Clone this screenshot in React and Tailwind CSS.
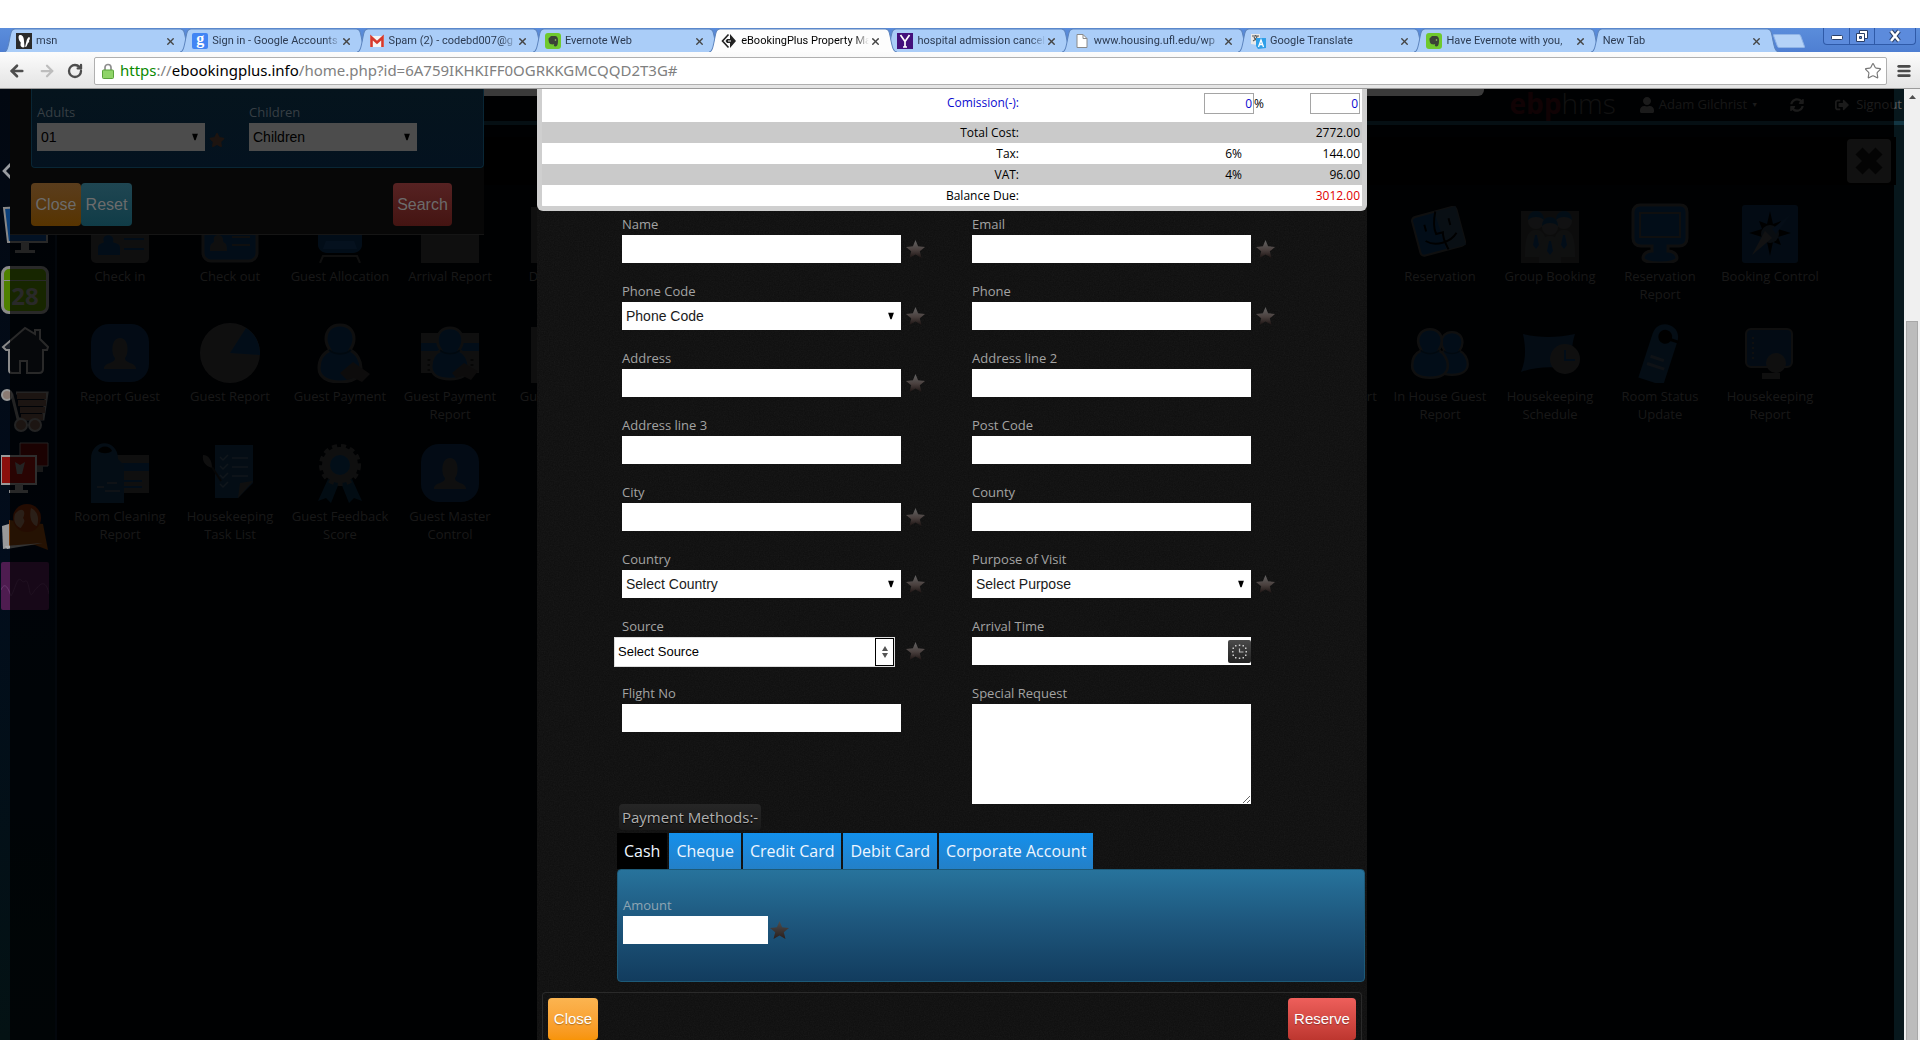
import React from 'react';
import { ArrowLeft, ArrowRight, RotateCw, Star, Menu, X } from 'lucide-react';
import { FaUser, FaSyncAlt, FaSignOutAlt, FaChevronLeft, FaStar } from 'react-icons/fa';

/* ---------- browser chrome ---------- */

const Fav = ({ kind }) => {
  const c = 'h-4 w-4 shrink-0';
  if (kind === 'msn')
    return (
      <svg className={c} viewBox="0 0 16 16">
        <rect width="16" height="16" fill="#2b2b2b" />
        <path d="M3 2.500c2.500-1.500 5 1 5 5.500l.5 6c-1.500 1-4 0-4-2 0-1.500.5-2 0-3C3 8 2 4 3 2.500z" fill="#fff" />
        <path d="M13 4c1.500.5 1 2.500 0 3.500.5 1 0 2-1 2.500l-1.500 3.500-1.500.5 1.500-6C11 6 12 4.500 13 4z" fill="#fff" />
      </svg>
    );
  if (kind === 'google')
    return (
      <span className="flex h-4 w-4 shrink-0 items-center justify-center rounded-xs bg-[#4285f4] pb-1 font-['Liberation_Serif',serif] text-base leading-none font-bold text-white">g</span>
    );
  if (kind === 'gmail')
    return (
      <svg className={c} viewBox="0 0 16 16">
        <path d="M1 3h14v11H1z" fill="#f4f4f4" />
        <path d="M2.500 14V4.500L8 9.500l5.500-5V14" fill="none" stroke="#d6392c" strokeWidth="2.600" />
      </svg>
    );
  if (kind === 'evernote')
    return (
      <svg className={c} viewBox="0 0 16 16">
        <rect width="16" height="16" rx="3" fill="#6fc92e" />
        <path d="M3.500 5.500L6 3h4c2 0 3 1.500 3 4.500s-.5 6-2.500 6-2-2-1-2.500c-1 .5-2.500.5-3.500.3C4 11 3.500 8 3.500 5.500z" fill="#3b4237" />
        <circle cx="10.500" cy="7" r=".8" fill="#9fd872" />
      </svg>
    );
  if (kind === 'ebp')
    return (
      <svg className={c} viewBox="0 0 16 16">
        <path d="M7.500 1.500L1.500 8l6 6.500" fill="none" stroke="#222" strokeWidth="1.600" />
        <path d="M9 1l6 7-6 7v-5H6L4.500 8 6 6h3z" fill="#222" />
        <path d="M7 8h3" stroke="#fff" />
      </svg>
    );
  if (kind === 'yahoo')
    return (
      <svg className={c} viewBox="0 0 16 16">
        <rect width="16" height="16" fill="#44107c" />
        <path d="M3.500 2L8 8.500 12.500 2M8 8v6M6 14h4" fill="none" stroke="#fff" strokeWidth="1.700" />
      </svg>
    );
  if (kind === 'doc')
    return (
      <svg className={c} viewBox="0 0 16 16">
        <path d="M3 1.500h6l4 4v9H3z" fill="#fff" stroke="#8a8a8a" />
        <path d="M9 1.500v4h4" fill="none" stroke="#8a8a8a" />
      </svg>
    );
  if (kind === 'translate')
    return (
      <svg className={c} viewBox="0 0 16 16">
        <path d="M1 1h9v9l-3 2-6-1z" fill="#e9e9e9" />
        <path d="M2 3h7M5.500 2v1M3 8c2-1 4-3 4-5M4 4c1 3 2 3 4 4" fill="none" stroke="#555" strokeWidth="1.100" />
        <path d="M6 5h10v10l-8 1-2-3z" fill="#2f9fe8" />
        <path d="M8.500 14l2.500-7 2.500 7M9.500 11.500h3" fill="none" stroke="#fff" strokeWidth="1.300" />
      </svg>
    );
  return null;
};

const TABS = [
  ['msn', 'msn'],
  ['Sign in - Google Accounts', 'google'],
  ['Spam (2) - codebd007@g', 'gmail'],
  ['Evernote Web', 'evernote'],
  ['eBookingPlus Property Ma', 'ebp'],
  ['hospital admission cancell', 'yahoo'],
  ['www.housing.ufl.edu/wp', 'doc'],
  ['Google Translate', 'translate'],
  ['Have Evernote with you,', 'evernote'],
  ['New Tab', null],
];

const Tab = ({ title, icon, active }) => (
  <div className={`relative flex h-6 min-w-0 flex-1 items-center pr-2 pl-2 ${active ? 'z-10' : ''}`}>
    <svg className="absolute inset-y-0 -left-1 h-6 w-[calc(100%+12px)]" viewBox="0 0 188 24" preserveAspectRatio="none">
      <path
        d="M0 24C3 24 4 20 6 9C7 3 8 1 11 1H176C179 1 180 3 181 9C183 20 184 24 188 24"
        fill={active ? '#fdfdfd' : '#aacdf8'}
        stroke="#5b83bd"
      />
    </svg>
    <button className="relative flex h-full min-w-0 flex-1 items-center gap-1 overflow-hidden pt-0.5">
      <Fav kind={icon} />
      <span
        className={`min-w-0 flex-1 overflow-hidden [mask-image:linear-gradient(to_right,black_88%,transparent)] text-left font-['Roboto',sans-serif] text-[11px] whitespace-nowrap ${active ? 'text-black' : 'text-[#2c3b52]'}`}
      >
        {title}
      </span>
    </button>
    <button aria-label={`Close ${title}`} className="relative flex w-3 items-center justify-center pt-0.5 text-[#444]">
      <X size={11} strokeWidth={3} />
    </button>
  </div>
);

const Chrome = () => (
  <header className="shrink-0 font-['Open_Sans',sans-serif]">
    <div className="h-7 bg-white" />
    <div className="flex h-6 bg-gradient-to-b from-[#5b8ddb] to-[#4f7fd2] pl-2">
      <nav className="flex min-w-0 flex-1">
        {TABS.map(([t, i]) => (
          <Tab key={t} title={t} icon={i} active={i === 'ebp'} />
        ))}
      </nav>
      <div className="flex w-[149px] shrink-0 items-start pl-1">
        <button aria-label="New tab" className="mt-1.5 h-3.5 w-7 skew-x-[20deg] rounded-xs border border-[#8fb3e6] bg-[#b4d2f7]" />
        <div className="mr-1 ml-auto flex h-[17px] w-[93px] divide-x divide-[#2f5aa8] rounded-b-sm border border-t-0 border-[#2f5aa8] bg-[#5c8bdc] text-white">
          <button aria-label="Minimize" className="flex w-[26px] items-center justify-center">
            <svg className="h-3 w-4" viewBox="0 0 16 12">
              <rect x="2.500" y="5.500" width="11" height="4" rx="1" fill="#fff" stroke="#2a3f68" />
            </svg>
          </button>
          <button aria-label="Restore" className="flex w-[25px] items-center justify-center">
            <svg className="h-3.5 w-4" viewBox="0 0 16 14">
              <g fill="#fff" stroke="#2a3f68">
                <path d="M5.500 1.500h8v8h-8z" />
                <path d="M2.500 4.500h8v8h-8z" />
                <path d="M5.500 7.500h2v2h-2z" fill="#5c8bdc" />
              </g>
            </svg>
          </button>
          <button aria-label="Close window" className="flex flex-1 items-center justify-center">
            <svg className="h-3.5 w-4" viewBox="0 0 16 14">
              <path d="M4 2l8 10M12 2L4 12" stroke="#2a3f68" strokeWidth="4.500" />
              <path d="M4 2l8 10M12 2L4 12" stroke="#fff" strokeWidth="2.500" />
            </svg>
          </button>
        </div>
      </div>
    </div>
    <div className="flex h-[37px] items-center border-b border-[#9b9b9b] bg-gradient-to-b from-[#fcfcfc] to-[#e4e4e4] px-2 pt-px">
      <button aria-label="Back" className="w-[30px] text-[#4d4d4d]"><ArrowLeft size={18} strokeWidth={3.5} /></button>
      <button aria-label="Forward" className="w-[29px] text-[#bdbdbd]"><ArrowRight size={18} strokeWidth={3} /></button>
      <button aria-label="Reload" className="w-[27px] text-[#4d4d4d]"><RotateCw size={16} strokeWidth={3.5} /></button>
      <div className="flex h-7 min-w-0 flex-1 items-center rounded-xs border border-[#b0b0b0] bg-white pr-1 pl-[7px]">
        <svg className="h-4 w-3 shrink-0" viewBox="0 0 12 16">
          <path d="M3 8V4.500a3 3 0 016 0V8" fill="none" stroke="#8e8e8e" strokeWidth="1.700" />
          <rect x=".5" y="7" width="11" height="8.500" rx="1" fill="#8fd468" stroke="#5aa23c" />
        </svg>
        <span className="ml-1.5 flex-1 truncate font-['Noto_Sans',sans-serif] text-[15px] text-[#808080]">
          <span className="text-[#0b8a00]">https</span>://<span className="text-black">ebookingplus.info</span>/home.php?id=6A759IKHKIFF0OGRKKGMCQQD2T3G#
        </span>
        <button aria-label="Bookmark" className="text-[#777]"><Star size={18} strokeWidth={1.5} /></button>
      </div>
      <button aria-label="Menu" className="ml-[9px] text-[#4a4a4a]"><Menu size={16} strokeWidth={4} /></button>
    </div>
  </header>
);

/* ---------- dimmed dashboard ---------- */

const B = '#0d4a85';
const W = '#555';

const Person = ({ x = 30, s = 1 }) => (
  <g transform={`translate(${x} 30) scale(${s}) translate(-30 -30)`}>
    <path
      d="M30 2c9 0 14 6 14 14 0 5-2 8-4 11 7 3 11 11 11 18 0 9-8 14-21 14S9 54 9 45c0-8 4-15 11-18-2-3-4-6-4-11 0-8 5-14 14-14z"
      fill={B}
      stroke={W}
      strokeWidth="3"
    />
    <path d="M19 27c6 5 16 5 22 0" fill="none" stroke="#0a3358" strokeWidth="2" />
  </g>
);

const ART = {
  card: (
    <>
      <rect x="1" y="8" width="58" height="52" rx="5" fill={W} />
      <path d="M8 52v-7c0-5 4-4 6-6-4-9 12-9 9 0 3 2 7 1 7 6v7z" fill={B} />
      <path d="M34 36h20M34 46h20" stroke={B} strokeWidth="2" />
    </>
  ),
  cardOut: (
    <>
      <rect x="3" y="6" width="54" height="52" rx="8" fill={B} stroke={W} strokeWidth="3" />
      <path d="M10 48c0-10 3-6 4-10-2-8 10-8 9 0 2 4 4 0 4 10z" fill={W} />
      <path d="M32 34h18M32 42h18" stroke={W} strokeWidth="2" />
    </>
  ),
  chair: (
    <>
      <path d="M8 28h44v14c0 4-4 8-9 8H17c-5 0-9-4-9-8z" fill={B} />
      <path d="M16 38h28l3 8H13z" fill="#1f5fa8" />
      <path d="M10 60l3-7h34l3 7" fill="none" stroke={W} strokeWidth="2" />
    </>
  ),
  sheet: <rect x="1" y="4" width="58" height="56" fill={W} />,
  guest: (
    <>
      <rect x="1" y="1" width="58" height="58" rx="18" fill="#123f70" />
      <path d="M14 46c0-7 11-5 11-11-4-4-4-20 5-20s9 16 5 20c0 6 11 4 11 11z" fill={W} />
    </>
  ),
  pie: (
    <>
      <circle cx="30" cy="30" r="30" fill={W} />
      <path d="M30 30L46 5a30 30 0 0114 27z" fill={B} />
    </>
  ),
  pay: (
    <>
      <Person />
      <path d="M30 50l13-11 17 12-8 8-8-4-7 2z" fill="#4a4340" />
    </>
  ),
  payCard: (
    <>
      <path d="M1 10h58v40H1z" fill={W} />
      <path d="M1 20h58v8H1z" fill={B} />
      <path d="M9 36v12M52 36v10" stroke="#222" strokeWidth="3" strokeDasharray="2 3" />
      <Person s={0.9} />
      <path d="M32 50l12-10 14 8-7 9-8-4-7 2z" fill="#4a4340" />
    </>
  ),
  cleaning: (
    <>
      <path d="M20 12h39v38H20z" fill={W} />
      <path d="M20 20h39v8H20zM34 37h18v2H34zM34 43h18v2H34z" fill={B} />
      <path d="M1 60V16C1-5 28-5 28 16l6 6v38z" fill="#174770" />
      <path d="M8 8c2-6 12-6 14 0-4 3-10 3-14 0z" fill="#000" />
      <path d="M7 44h7M17 40h10M15 48h15" stroke="#567" strokeWidth="2" />
    </>
  ),
  tasks: (
    <>
      <path d="M15 2h38v38L38 55H15z" fill="#174770" />
      <path d="M53 38L38 55l2-15z" fill={W} />
      <path d="M20 14l3 3 5-5M20 23l3 3 5-5M20 32l3 3 5-5M20 41l3 3 5-5M32 15h16M32 24h16M32 33h16" fill="none" stroke="#5b7a94" strokeWidth="1.500" />
      <path d="M3 12c6 0 9 6 9 13C5 23 2 18 3 12z" fill={W} />
      <path d="M12 24l9 14" stroke="#222" strokeWidth="2" />
    </>
  ),
  ribbon: (
    <>
      <path d="M18 36l-10 22 8-3 5 5 8-20zM42 36l10 22-8-3-5 5-8-20z" fill="#0d4268" />
      <circle cx="30" cy="22" r="18" fill={W} />
      <circle cx="30" cy="22" r="19" fill="none" stroke={W} strokeWidth="4" strokeDasharray="5 4" />
      <circle cx="30" cy="22" r="10" fill="#0e4f82" />
    </>
  ),
  finder: (
    <g transform="rotate(-15 30 30)">
      <rect x="6" y="8" width="46" height="40" rx="4" fill={B} stroke={W} strokeWidth="2" />
      <path d="M30 8h22v40H32z" fill="#34546f" />
      <path d="M17 18v7M42 18v7M14 34c8 8 24 8 32 0M31 8c-4 8-6 16-5 22h7c-2 6 0 13 1 18" fill="none" stroke="#000" strokeWidth="2" />
    </g>
  ),
  group: (
    <>
      <path d="M1 8h58v52H1z" fill="#444" />
      {[16, 44, 30].map((x) => (
        <g key={x} transform={x === 30 ? 'translate(0 6)' : undefined}>
          <path d={`M${x - 11} 54c0-20 3-27 11-27s11 7 11 27z`} fill="#585858" />
          <circle cx={x} cy="18" r="8" fill="#606060" />
          <path d={`M${x - 8} 17c0-12 16-12 16 0-4-4-12-4-16 0z`} fill="#0d4a78" />
          <path d={`M${x - 1} 32h2l2 10-3 4-3-4z`} fill={B} />
        </g>
      ))}
    </>
  ),
  monitor: (
    <>
      <path d="M10 2h40c5 0 7 3 7 7v26c0 5-3 8-8 8H38v5c5 0 9 3 9 7 0 3-7 5-17 5s-17-2-17-5c0-4 4-7 9-7v-5H11c-5 0-8-3-8-8V9c0-4 3-7 7-7z" fill={B} stroke={W} strokeWidth="3" />
      <path d="M10 10h40v24H10z" fill="none" stroke={W} strokeWidth="2" />
    </>
  ),
  compass: (
    <>
      <rect x="2" y="2" width="56" height="58" rx="3" fill="#123f6d" />
      <path d="M30 8l3 13 8-3-3 8 13 4-13 4 3 8-8-3-3 14-3-14-8 3 3-8-13-4 13-4-3-8 8 3z" fill="#000" />
      <circle cx="30" cy="31" r="9" fill="#34485c" />
      <path d="M12 52l13-24 7 7z" fill="#666" />
      <path d="M50 12L32 26l4 5z" fill="#1b4a7c" />
    </>
  ),
  people: (
    <>
      <Person x={42} s={0.75} />
      <Person x={20} s={0.85} />
    </>
  ),
  pillow: (
    <>
      <path d="M3 11c16 4 34 4 52 0-4 12-4 24 0 36-18-4-38-4-54 2 5-12 5-24 2-38z" fill="#17406c" />
      <circle cx="45" cy="36" r="15" fill={W} />
      <path d="M45 27v10h10" fill="none" stroke={B} strokeWidth="2" />
    </>
  ),
  hanger: (
    <g transform="rotate(18 30 30)">
      <path d="M17 60V14c0-18 26-18 26 0v46z" fill="#174770" />
      <circle cx="30" cy="13" r="7" fill="#000" />
      <path d="M30 14h14" stroke="#000" strokeWidth="3" />
      <path d="M22 36h14M21 44h18" stroke="#567" strokeWidth="3" />
    </g>
  ),
  screen: (
    <>
      <rect x="6" y="6" width="46" height="38" rx="5" fill="#123f6d" stroke={W} strokeWidth="2" />
      <path d="M13 14v24" stroke={W} strokeWidth="2" strokeDasharray="2 3" />
      <circle cx="36" cy="40" r="10" fill={W} />
      <path d="M22 50h18v6H22z" fill={W} />
    </>
  ),
};

const Tile = ({ label, art }) => (
  <a href="#" className="flex h-[120px] flex-col items-center">
    <svg className="h-15 w-15 opacity-60" viewBox="0 0 60 60">{ART[art]}</svg>
    <span className="mt-1 w-[100px] text-center text-[13px] leading-[18px] text-[#505050]">{label}</span>
  </a>
);

const LEFT = [
  ['Check in', 'card'], ['Check out', 'cardOut'], ['Guest Allocation', 'chair'], ['Arrival Report', 'sheet'], ['Departure', 'sheet'],
  ['Report Guest', 'guest'], ['Guest Report', 'pie'], ['Guest Payment', 'pay'], ['Guest Payment Report', 'payCard'], ['Guest Details', 'sheet'],
  ['Room Cleaning Report', 'cleaning'], ['Housekeeping Task List', 'tasks'], ['Guest Feedback Score', 'ribbon'], ['Guest Master Control', 'guest'],
];
const RIGHT = [
  ['Rooms', 'card'], ['Reservation', 'finder'], ['Group Booking', 'group'], ['Reservation Report', 'monitor'], ['Booking Control', 'compass'],
  ['Booking Report', 'card'], ['In House Guest Report', 'people'], ['Housekeeping Schedule', 'pillow'], ['Room Status Update', 'hanger'], ['Housekeeping Report', 'screen'],
];

const Rail = () => (
  <aside className="flex w-[57px] shrink-0 flex-col border-r-2 border-[#0b1a2a] bg-gradient-to-b from-[#020811] via-[#020d1c] to-[#041214] pt-[73px] pl-px">
    <FaChevronLeft className="h-[18px] w-3 text-white/60" />
    <svg className="mt-6 h-[50px] w-12" viewBox="0 0 48 50">
      <path d="M3 4l43-2v36H7z" fill="#0b3f78" stroke="#888" strokeWidth="2" />
      <path d="M20 38h8v8h6v3H14v-3h6z" fill="#777" />
    </svg>
    <div className="mt-3 flex h-12 w-12 flex-col items-center rounded-lg border-[3px] border-[#8a8a8a] bg-[#4f8000]">
      <div className="h-3 w-full border-b border-[#8a8a8a]" />
      <span className="text-2xl leading-[30px] font-bold text-[#8a8a8a]">28</span>
    </div>
    <svg className="mt-3 h-12 w-12" viewBox="0 0 48 48">
      <path d="M24 2L2 21l3 3h3v20c0 2 1 3 3 3h8V35h7v12h12c3 0 4-2 4-4V24h4l1-3-8-8V4h-5v4z" fill="#161c26" stroke="#8a8a8a" strokeWidth="2" />
    </svg>
    <svg className="mt-3.5 h-11 w-12" viewBox="0 0 48 44">
      <path d="M6 7h5l6 24h25l4-26H15" fill="none" stroke="#777" strokeWidth="3" />
      <path d="M16 8h29M17 15h28M19 22h25M20 29h22" stroke="#60483d" strokeWidth="6" />
      <circle cx="6" cy="7" r="5" fill="#8a7a72" stroke="#999" strokeWidth="2" />
      <circle cx="20" cy="37" r="6" fill="#60483d" stroke="#777" strokeWidth="2" />
      <circle cx="34" cy="37" r="6" fill="#60483d" stroke="#777" strokeWidth="2" />
    </svg>
    <svg className="mt-2.5 h-13 w-12" viewBox="0 0 48 52">
      <path d="M19 1h28v23H19z" fill="#5a0808" stroke="#777" />
      <path d="M34 24h8v6h-8z" fill="#555" />
      <path d="M0 14h35v28H0z" fill="#8a0f0c" stroke="#999" strokeWidth="2" />
      <path d="M14 20l5 3 5-3-3 12h-5z" fill="#777" />
      <path d="M14 42h8v6h5v3H8v-3h6z" fill="#888" />
    </svg>
    <svg className="mt-2 h-13 w-12" viewBox="0 0 48 52">
      <path d="M1 24l10-3 3 24-12 2z" fill="#999" />
      <path d="M8 18l34 4 5 26-13-5-26 1z" fill="#7c3c0a" />
      <circle cx="26" cy="16" r="14" fill="#7a2807" />
      <path d="M14 12c6-8 12-4 8 4 4 4-2 8-2 10-6-2-8-8-6-14zM30 6c8 4 8 12 6 18-6-2-8-10-6-18z" fill="#8c6a52" />
      <path d="M4 44l38-3-36 6z" fill="#aaa" />
    </svg>
    <svg className="mt-2 h-12 w-12" viewBox="0 0 48 48">
      <rect width="48" height="48" rx="2" fill="#4e1c50" />
      <path d="M0 28c4-10 8 0 10 6 4-6 6-20 10-16 4 6 5-6 8 8 2 14 4 2 8 0 6-8 10-4 12 6" fill="none" stroke="#6b3a70" />
    </svg>
  </aside>
);

const Dashboard = () => (
  <div className="flex h-full overflow-hidden">
    <Rail />
    <div className="min-w-0 flex-1 bg-[linear-gradient(to_left,#07171c_10px,#020407_10px)]">
      <div className="flex h-9 items-center justify-end border-b-4 border-[#123542] text-[13px] text-[#5c5c5c]">
        <span className="mr-6 pb-1 text-[28px] leading-none font-bold text-[#380810]">ebp<span className="font-light text-[#3a3a3a]">hms</span></span>
        <FaUser className="mr-[5px] h-4 w-3.5" />
        <span className="text-[#4c4c4c]">Adam Gilchrist</span>
        <span className="ml-1 text-[7px]">▼</span>
        <FaSyncAlt className="ml-8 h-4 w-3.5" />
        <FaSignOutAlt className="ml-[30px] h-3.5 w-4" />
        <a href="#" className="ml-1.5 pr-0.5">Signout</a>
      </div>
      <div className="mt-3 mr-2 flex h-12 items-center justify-end bg-black pr-[5px]">
        <button aria-label="Close panel" className="flex h-11 w-11 items-center justify-center rounded-sm bg-[#3a3a3a]">
          <svg className="h-8 w-8" viewBox="0 0 32 32">
            <path d="M6 6l20 20M26 6L6 26" stroke="#101010" strokeWidth="10" />
          </svg>
        </button>
      </div>
      <div className="mt-[18px] flex justify-between pr-[79px] pl-2">
        <div className="grid grid-cols-[repeat(5,110px)] content-start">
          {LEFT.map(([l, a], i) => <Tile key={i} label={l} art={a} />)}
        </div>
        <div className="grid grid-cols-[repeat(5,110px)] content-start">
          {RIGHT.map(([l, a], i) => <Tile key={i} label={l} art={a} />)}
        </div>
      </div>
    </div>
  </div>
);

/* ---------- search dialog ---------- */

const Caret = ({ className }) => (
  <svg className={`pointer-events-none absolute top-1/2 h-[7px] w-1.5 -translate-y-1/2 ${className}`} viewBox="0 0 6 7">
    <path d="M0 0h6L3.500 7h-1z" fill="#000" />
  </svg>
);

const DimSelect = ({ id, label, value }) => (
  <div className="w-[168px]">
    <label htmlFor={id} className="block h-[22px] text-[13px] leading-[22px] text-[#373f44]">{label}</label>
    <div className="relative">
      <select id={id} className="block h-7 w-full appearance-none bg-[#4c4c4c] px-1 font-['Liberation_Sans',sans-serif] text-sm text-black">
        <option>{value}</option>
      </select>
      <Caret className="right-[7px]" />
    </div>
  </div>
);

const SearchDialog = () => (
  <section className="absolute top-0 left-[10px] w-[474px] border-b border-[#151515] bg-[#070707] pb-2">
    <div className="ml-[21px] flex h-[79px] rounded-b-sm border border-t-0 border-[#092635] bg-gradient-to-b from-[#05141d] to-[#04121f] pt-3 pl-[5px]">
      <DimSelect id="adults" label="Adults" value="01" />
      <FaStar className="mt-[31px] mr-6 ml-1 h-4 w-4 text-[#1d1410]" />
      <DimSelect id="children" label="Children" value="Children" />
    </div>
    <div className="mt-[15px] mr-8 ml-[21px] flex font-['Liberation_Sans',sans-serif] text-base text-[#6c6c6c]">
      <button className="h-[43px] w-[50px] rounded-sm bg-gradient-to-b from-[#5a3d1c] to-[#573400]">Close</button>
      <button className="h-[43px] w-[51px] rounded-sm bg-gradient-to-b from-[#1f4652] to-[#103c47]">Reset</button>
      <button className="ml-auto h-[43px] w-[59px] rounded-sm bg-gradient-to-b from-[#562222] to-[#441412]">Search</button>
    </div>
  </section>
);

/* ---------- reservation dialog ---------- */

const Required = ({ dark }) => (
  <svg className="h-[19px] w-[19px] shrink-0" viewBox="0 0 19 19">
    <defs>
      <linearGradient id="req" x1="0" y1="0" x2="0" y2="1">
        <stop offset="0" stopColor="#636363" />
        <stop offset=".55" stopColor="#4a403e" />
        <stop offset="1" stopColor="#1c1413" />
      </linearGradient>
      <linearGradient id="reqd" x1="0" y1="0" x2="0" y2="1">
        <stop offset="0" stopColor="#4e4e4e" />
        <stop offset="1" stopColor="#2a1e1c" />
      </linearGradient>
    </defs>
    <path d="M9.500 0l2.600 6.200 6.900.7-5.200 4.400 1.700 6.700-6-3.400-6 3.400 1.700-6.700L0 6.900l6.900-.7z" fill={dark ? 'url(#reqd)' : 'url(#req)'} />
  </svg>
);

const Field = ({ id, label, required, options, area, children }) => (
  <div className="pl-[5px]">
    <label htmlFor={id} className="block h-6 text-[13px] leading-[26px] text-[#a3a3a3]">{label}</label>
    <div className="flex items-center gap-[5px]">
      <div className={`relative w-[279px] ${area ? '' : 'h-7'}`}>
        {children ||
          (options ? (
            <>
              <select id={id} className="block h-7 w-full appearance-none bg-white px-1 font-['Liberation_Sans',sans-serif] text-sm text-[#1a1a1a]">
                <option>{options}</option>
              </select>
              <Caret className="right-[7px]" />
            </>
          ) : area ? (
            <textarea id={id} className="block h-[100px] w-full resize bg-white p-1 text-sm" />
          ) : (
            <input id={id} type="text" className="block h-7 w-full bg-white px-1 text-sm" />
          ))}
      </div>
      {required && <Required />}
    </div>
  </div>
);

const SourceSelect = () => (
  <div className="-ml-2 flex h-[30px] w-[281px] border border-[#ddd] bg-white">
    <select id="source" className="h-full min-w-0 flex-1 appearance-none px-[3px] font-['Liberation_Sans',sans-serif] text-[13px] text-black">
      <option>Select Source</option>
    </select>
    <span className="flex w-[19px] items-center justify-center border border-black">
      <svg className="h-3 w-2" viewBox="0 0 8 12">
        <path d="M4 0l3 5H1zM4 12l3-5H1z" fill="#555" />
      </svg>
    </span>
  </div>
);

const ArrivalInput = () => (
  <>
    <input id="arrival" type="text" className="block h-7 w-full bg-white px-1 text-sm" />
    <button type="button" aria-label="Pick time" className="absolute top-[3px] right-0 h-[23px] w-[23px] rounded-xs bg-gradient-to-b from-[#4a4a4a] to-[#222]">
      <svg className="h-full w-full" viewBox="0 0 23 23">
        <path
          d="M7 5h1.500v1.500H7zM10.800 4.500h1.500V6h-1.500zM14.500 5H16v1.500h-1.500zM17 7.500h1.500V9H17zM17.500 11H19v1.500h-1.500zM17 14.500h1.500V16H17zM14.500 17H16v1.500h-1.500zM10.800 17.500h1.500V19h-1.500zM7 17h1.500v1.500H7zM4.500 14.500H6V16H4.500zM4 11h1.500v1.500H4zM4.500 7.500H6V9H4.500z"
          fill="#ccc"
        />
        <path d="M11.500 8.500v3.500H15.500" fill="none" stroke="#bbb" strokeWidth="1.200" />
      </svg>
    </button>
  </>
);

const ROWS = [
  ['Total Cost:', '', '2772.00'],
  ['Tax:', '6%', '144.00'],
  ['VAT:', '4%', '96.00'],
  ['Balance Due:', '', '3012.00'],
];

const Costs = () => (
  <div className="rounded-b-md border-x-[5px] border-b-[5px] border-[#cfcfcf] bg-white">
    <table className="w-full table-fixed text-right text-xs text-black">
      <colgroup>
        <col />
        <col className="w-[244px]" />
        <col className="w-24" />
      </colgroup>
      <tbody>
        <tr className="h-[33px] align-top text-[#0a0ad0]">
          <td className="pt-1 pr-[3px] leading-5"><label htmlFor="commission">Comission(-):</label></td>
          <td className="pt-1 pr-0.5">
            <div className="flex items-center justify-end text-black">
              <input id="commission" defaultValue="0" className="h-[21px] w-[50px] border border-[#a5a5a5] px-px text-right text-[#0a0ad0]" />
              <span>%</span>
            </div>
          </td>
          <td className="pt-1 pr-0.5">
            <input aria-label="Comission amount" defaultValue="0" className="ml-auto block h-[21px] w-[50px] border border-[#a5a5a5] px-px text-right" />
          </td>
        </tr>
        {ROWS.map(([l, p, v], i) => (
          <tr key={l} className={i % 2 ? 'h-[21px]' : 'h-[21px] bg-[#cacaca]'}>
            <td className="pr-[3px]">{l}</td>
            <td className="pr-6">{p}</td>
            <td className={i === 3 ? 'pr-0.5 text-[#e00000]' : 'pr-0.5'}>{v}</td>
          </tr>
        ))}
      </tbody>
    </table>
  </div>
);

const METHODS = ['Cash', 'Cheque', 'Credit Card', 'Debit Card', 'Corporate Account'];

const Reservation = () => (
  <section className="absolute top-0 left-1/2 min-h-full w-[830px] -translate-x-1/2 bg-[#0e0e0e]">
    <svg aria-hidden="true" className="absolute inset-0 -z-10 h-full w-full opacity-6">
      <filter id="grain">
        <feTurbulence type="fractalNoise" baseFrequency="0.8" numOctaves="2" />
        <feColorMatrix type="saturate" values="0" />
      </filter>
      <rect width="100%" height="100%" filter="url(#grain)" />
    </svg>
    <Costs />
    <form className="ml-20 grid w-[700px] grid-cols-2 gap-y-[15px]">
      <Field id="name" label="Name" required />
      <Field id="email" label="Email" required />
      <Field id="pcode" label="Phone Code" required options="Phone Code" />
      <Field id="phone" label="Phone" required />
      <Field id="addr" label="Address" required />
      <Field id="addr2" label="Address line 2" />
      <Field id="addr3" label="Address line 3" />
      <Field id="post" label="Post Code" />
      <Field id="city" label="City" required />
      <Field id="county" label="County" />
      <Field id="country" label="Country" required options="Select Country" />
      <Field id="purpose" label="Purpose of Visit" required options="Select Purpose" />
      <Field id="source" label="Source" required><SourceSelect /></Field>
      <Field id="arrival" label="Arrival Time"><ArrivalInput /></Field>
      <Field id="flight" label="Flight No" />
      <Field id="special" label="Special Request" area />
    </form>
    <div className="ml-20 pr-0.5">
      <h2 className="ml-0.5 inline-flex h-[26px] items-center rounded-sm bg-gradient-to-b from-[#262626] to-[#1a1a1a] px-[3px] align-top text-[15px] text-[#b0b0b0] [text-shadow:0_1px_1px_#000]">Payment Methods:-</h2>
      <div className="mt-[3px] flex gap-0.5" role="tablist">
        {METHODS.map((m, i) => (
          <button
            key={m}
            type="button"
            role="tab"
            aria-selected={i === 0}
            className={`h-9 px-[7px] text-base text-[#eef6ff] ${i === 0 ? 'bg-black' : 'bg-gradient-to-b from-[#1290ec] to-[#2380c8]'}`}
          >
            {m}
          </button>
        ))}
      </div>
      <div className="h-[113px] rounded-sm border border-[#1d5a78] bg-gradient-to-b from-[#27739c] via-[#1d557b] to-[#123c5e] pt-[22px] pl-[5px]">
        <label htmlFor="amount" className="block h-6 text-[13px] leading-[26px] text-[#8fa5b3]">Amount</label>
        <div className="flex items-center gap-[2px]">
          <input id="amount" className="h-7 w-[145px] bg-white px-1 text-sm" />
          <Required dark />
        </div>
      </div>
    </div>
    <footer className="mx-[5px] mt-2.5 flex justify-between rounded-t-sm border border-b-0 border-[#2a2a2a] px-[5px] pt-[5px] font-['Liberation_Sans',sans-serif] text-[15px] text-white">
      <button className="h-[42px] w-[50px] rounded-sm bg-gradient-to-b from-[#fbb450] to-[#f89406] [text-shadow:0_1px_1px_rgba(0,0,0,.3)]">Close</button>
      <button className="h-[42px] w-[68px] rounded-sm bg-gradient-to-b from-[#ee5f5b] to-[#bd362f] [text-shadow:0_1px_1px_rgba(0,0,0,.3)]">Reserve</button>
    </footer>
  </section>
);

const Scrollbar = () => (
  <div className="flex w-4 shrink-0 flex-col bg-[#f0f0f0]">
    <div className="flex h-4 items-center justify-center">
      <svg className="h-1 w-[7px]" viewBox="0 0 7 4"><path d="M3.500 0L7 4H0z" fill="#505050" /></svg>
    </div>
    <div className="mx-0.5 mt-[216px] flex-1 border border-b-0 border-[#a8a8a8] bg-[#bcbcbc]" />
  </div>
);

export default function App() {
  return (
    <div className="flex h-screen flex-col overflow-hidden bg-black font-['Open_Sans',sans-serif]">
      <Chrome />
      <div className="flex min-h-0 flex-1">
        <main className="relative min-w-0 flex-1 overflow-hidden">
          <Dashboard />
          <div className="absolute inset-y-0 right-[10px] left-[10px] bg-black/70" />
          <div className="absolute top-0 left-1/2 h-[7px] w-[1064px] -translate-x-1/2 rounded-b-md bg-[#3a3a3a]" />
          <SearchDialog />
          <Reservation />
        </main>
        <Scrollbar />
      </div>
    </div>
  );
}
